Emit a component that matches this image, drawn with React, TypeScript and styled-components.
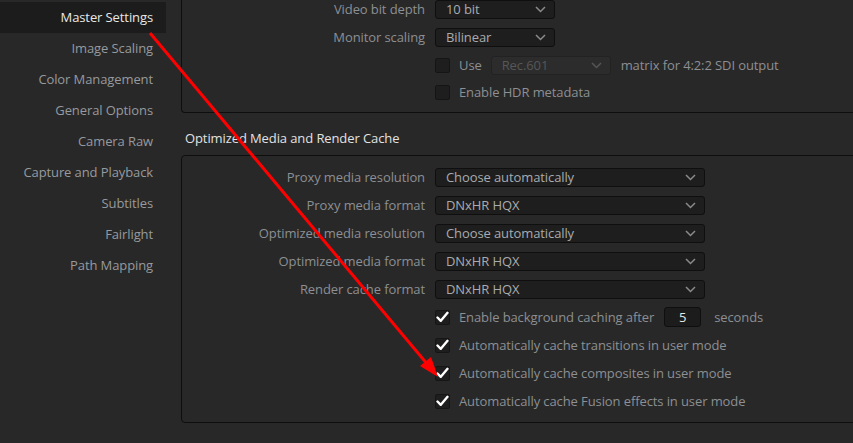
import React from "react";
import styled, { createGlobalStyle } from "styled-components";

const Global = createGlobalStyle`
  html, body { margin: 0; padding: 0; background: #282828; overflow: hidden; }
  body { font-family: "Open Sans", "Noto Sans", sans-serif; font-size: 13px; letter-spacing: -0.1px; }
`;

const Page = styled.div`
  position: relative;
  width: 853px;
  height: 443px;
  overflow: hidden;
  display: flex;
  background: #282828;
`;

const Sidebar = styled.nav`
  width: 166px;
  flex: none;
  padding-top: 2px;
  display: flex;
  flex-direction: column;
`;

const NavItem = styled.div<{ $active?: boolean }>`
  height: 31px;
  line-height: 31px;
  text-align: right;
  padding-right: 13px;
  color: ${(p) => (p.$active ? "#e8e8e8" : "#979a9e")};
  background: ${(p) => (p.$active ? "#1c1c1c" : "transparent")};
  white-space: nowrap;
`;

const Main = styled.main`
  flex: 1;
  padding-left: 15px;
  display: flex;
  flex-direction: column;
  min-width: 0;
`;

const Panel = styled.section<{ $cutTop?: boolean }>`
  width: 720px;
  border: 1px solid #0e0e0e;
  border-radius: 4px;
  background: #282828;
  padding: 7px 0 7px;
  ${(p) =>
    p.$cutTop
      ? "padding-top: 0; margin-top: -5px; border-top: none; border-top-left-radius: 0; border-top-right-radius: 0;"
      : ""}
  display: flex;
  flex-direction: column;
`;

const SectionTitle = styled.h2`
  margin: 0;
  padding: 17px 0 9px 4px;
  height: 16px;
  line-height: 16px;
  font-size: 13px;
  font-weight: 400;
  color: #e2e2e2;
`;

const Row = styled.div<{ $h?: number }>`
  height: ${(p) => p.$h ?? 28}px;
  display: grid;
  grid-template-columns: 243px auto;
  column-gap: 10px;
  align-items: center;
`;

const Label = styled.span`
  text-align: right;
  color: #8c8f93;
  white-space: nowrap;
`;

const Controls = styled.div`
  display: flex;
  align-items: center;
  white-space: nowrap;
`;

const Select = styled.div<{ $w: number; $disabled?: boolean }>`
  width: ${(p) => p.$w}px;
  height: 19px;
  box-sizing: border-box;
  border: 1px solid ${(p) => (p.$disabled ? "#222" : "#0f0f0f")};
  border-radius: 3px;
  background: ${(p) => (p.$disabled ? "#2c2c2c" : "#1e1e1e")};
  color: ${(p) => (p.$disabled ? "#575757" : "#a9abae")};
  display: flex;
  align-items: center;
  justify-content: space-between;
  padding: 0 8px 0 10px;
  line-height: 17px;
`;

const Check = styled.span<{ $on?: boolean }>`
  width: 15px;
  height: 15px;
  box-sizing: border-box;
  border: 1px solid #151515;
  border-radius: 2px;
  background: #1e1e1e;
  display: inline-flex;
  align-items: center;
  justify-content: center;
  flex: none;
`;

const Text = styled.span<{ $ml?: number }>`
  margin-left: ${(p) => p.$ml ?? 0}px;
  color: #8c8f93;
`;

const NumBox = styled.span`
  margin-left: 10px;
  width: 37px;
  height: 20px;
  box-sizing: border-box;
  border: 1px solid #0f0f0f;
  border-radius: 3px;
  background: #1c1c1c;
  color: #e6e6e6;
  display: inline-flex;
  align-items: center;
  justify-content: center;
`;

const Overlay = styled.svg`
  position: absolute;
  left: 0;
  top: 0;
  pointer-events: none;
`;

const Chevron = ({ dim }: { dim?: boolean }) => (
  <svg width="11" height="7" viewBox="0 0 11 7">
    <path d="M1 1 L5.5 5.5 L10 1" fill="none" stroke={dim ? "#555" : "#8a8a8a"} strokeWidth="1.5" />
  </svg>
);

const Tick = () => (
  <svg width="13" height="12" viewBox="0 0 13 12">
    <path d="M1.5 6.5 L4.8 9.8 L11.5 1.8" fill="none" stroke="#ffffff" strokeWidth="2.4" strokeLinecap="round" strokeLinejoin="round" />
  </svg>
);

const CheckBox = ({ on }: { on?: boolean }) => <Check $on={on}>{on ? <Tick /> : null}</Check>;

const SelectBox = ({ value, w, disabled }: { value: string; w: number; disabled?: boolean }) => (
  <Select $w={w} $disabled={disabled}>
    <span>{value}</span>
    <Chevron dim={disabled} />
  </Select>
);

const nav = [
  "Master Settings",
  "Image Scaling",
  "Color Management",
  "General Options",
  "Camera Raw",
  "Capture and Playback",
  "Subtitles",
  "Fairlight",
  "Path Mapping",
];

const cacheSelects: [string, string][] = [
  ["Proxy media resolution", "Choose automatically"],
  ["Proxy media format", "DNxHR HQX"],
  ["Optimized media resolution", "Choose automatically"],
  ["Optimized media format", "DNxHR HQX"],
  ["Render cache format", "DNxHR HQX"],
];

const autoChecks = [
  "Automatically cache transitions in user mode",
  "Automatically cache composites in user mode",
  "Automatically cache Fusion effects in user mode",
];

export default function App() {
  return (
    <>
      <Global />
      <Page>
        <Sidebar>
          {nav.map((n, i) => (
            <NavItem key={n} $active={i === 0}>
              {n}
            </NavItem>
          ))}
        </Sidebar>
        <Main>
          <Panel $cutTop>
            <Row>
              <Label>Video bit depth</Label>
              <Controls>
                <SelectBox value="10 bit" w={120} />
              </Controls>
            </Row>
            <Row>
              <Label>Monitor scaling</Label>
              <Controls>
                <SelectBox value="Bilinear" w={120} />
              </Controls>
            </Row>
            <Row>
              <span />
              <Controls>
                <CheckBox />
                <Text $ml={9}>Use</Text>
                <span style={{ marginLeft: 9 }}>
                  <SelectBox value="Rec.601" w={120} disabled />
                </span>
                <Text $ml={10}>matrix for 4:2:2 SDI output</Text>
              </Controls>
            </Row>
            <Row $h={26}>
              <span />
              <Controls>
                <CheckBox />
                <Text $ml={9}>Enable HDR metadata</Text>
              </Controls>
            </Row>
          </Panel>
          <SectionTitle>Optimized Media and Render Cache</SectionTitle>
          <Panel>
            {cacheSelects.map(([l, v]) => (
              <Row key={l}>
                <Label>{l}</Label>
                <Controls>
                  <SelectBox value={v} w={270} />
                </Controls>
              </Row>
            ))}
            <Row>
              <span />
              <Controls>
                <CheckBox on />
                <Text $ml={9}>Enable background caching after</Text>
                <NumBox>5</NumBox>
                <Text $ml={13}>seconds</Text>
              </Controls>
            </Row>
            {autoChecks.map((c) => (
              <Row key={c}>
                <span />
                <Controls>
                  <CheckBox on />
                  <Text $ml={9}>{c}</Text>
                </Controls>
              </Row>
            ))}
          </Panel>
        </Main>
        <Overlay width="853" height="443" viewBox="0 0 853 443">
          <line x1="150" y1="33" x2="428" y2="365" stroke="#ff0000" strokeWidth="3" />
          <polygon points="438,377 420,366 431,357" fill="#ff0000" />
        </Overlay>
      </Page>
    </>
  );
}
